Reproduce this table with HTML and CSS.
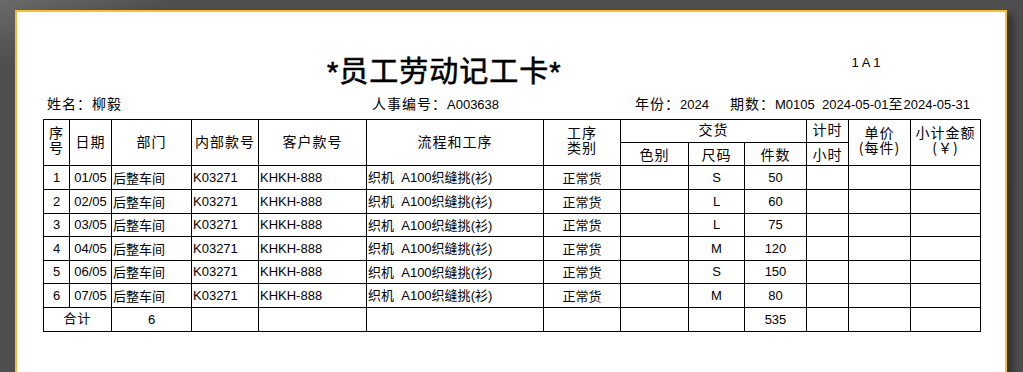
FILE: index.html
```html
<!DOCTYPE html>
<html lang="zh">
<head>
<meta charset="utf-8">
<title>员工劳动记工卡</title>
<link rel="stylesheet" href="styles.css">
</head>
<body>
<div class="page">
  <div class="head">
    <h1 class="title">*员工劳动记工卡*</h1>
    <div class="code">1 A 1</div>
  </div>
  <div class="info">
    <div><span class="cj">姓名：柳毅</span></div>
    <div><span class="cj">人事编号：</span>A003638</div>
    <div><span class="cj">年份：</span>2024</div>
    <div><span class="cj">期数：</span>M0105&nbsp; 2024-05-01<span class="cj">至</span>2024-05-31</div>
  </div>
  <table class="card">
    <colgroup>
      <col class="c1"><col class="c2"><col class="c3"><col class="c4"><col class="c5"><col class="c6"><col class="c7"><col class="c8"><col class="c9"><col class="c10"><col class="c11"><col class="c12"><col class="c13">
    </colgroup>
    <thead>
      <tr class="h1">
        <th rowspan="2" class="stack">序<br>号</th>
        <th rowspan="2">日期</th>
        <th rowspan="2">部门</th>
        <th rowspan="2">内部款号</th>
        <th rowspan="2">客户款号</th>
        <th rowspan="2">流程和工序</th>
        <th rowspan="2" class="stack">工序<br>类别</th>
        <th colspan="3" class="top">交货</th>
        <th class="top">计时</th>
        <th rowspan="2" class="stack">单价<br>(每件)</th>
        <th rowspan="2" class="stack">小计金额<br>(￥)</th>
      </tr>
      <tr class="h2">
        <th>色别</th>
        <th>尺码</th>
        <th>件数</th>
        <th>小时</th>
      </tr>
    </thead>
    <tbody>
      <tr class="r24"><td class="ctr">1</td><td class="ctr">01/05</td><td class="cj">后整车间</td><td>K03271</td><td>KHKH-888</td><td><span class="cj">织机</span>&nbsp; A100<span class="cj">织缝挑</span>(<span class="cj">衫</span>)</td><td class="ctr cj">正常货</td><td></td><td class="ctr">S</td><td class="ctr">50</td><td></td><td></td><td></td></tr>
      <tr class="r24"><td class="ctr">2</td><td class="ctr">02/05</td><td class="cj">后整车间</td><td>K03271</td><td>KHKH-888</td><td><span class="cj">织机</span>&nbsp; A100<span class="cj">织缝挑</span>(<span class="cj">衫</span>)</td><td class="ctr cj">正常货</td><td></td><td class="ctr">L</td><td class="ctr">60</td><td></td><td></td><td></td></tr>
      <tr class="r23"><td class="ctr">3</td><td class="ctr">03/05</td><td class="cj">后整车间</td><td>K03271</td><td>KHKH-888</td><td><span class="cj">织机</span>&nbsp; A100<span class="cj">织缝挑</span>(<span class="cj">衫</span>)</td><td class="ctr cj">正常货</td><td></td><td class="ctr">L</td><td class="ctr">75</td><td></td><td></td><td></td></tr>
      <tr class="r24"><td class="ctr">4</td><td class="ctr">04/05</td><td class="cj">后整车间</td><td>K03271</td><td>KHKH-888</td><td><span class="cj">织机</span>&nbsp; A100<span class="cj">织缝挑</span>(<span class="cj">衫</span>)</td><td class="ctr cj">正常货</td><td></td><td class="ctr">M</td><td class="ctr">120</td><td></td><td></td><td></td></tr>
      <tr class="r23"><td class="ctr">5</td><td class="ctr">06/05</td><td class="cj">后整车间</td><td>K03271</td><td>KHKH-888</td><td><span class="cj">织机</span>&nbsp; A100<span class="cj">织缝挑</span>(<span class="cj">衫</span>)</td><td class="ctr cj">正常货</td><td></td><td class="ctr">S</td><td class="ctr">150</td><td></td><td></td><td></td></tr>
      <tr class="r24"><td class="ctr">6</td><td class="ctr">07/05</td><td class="cj">后整车间</td><td>K03271</td><td>KHKH-888</td><td><span class="cj">织机</span>&nbsp; A100<span class="cj">织缝挑</span>(<span class="cj">衫</span>)</td><td class="ctr cj">正常货</td><td></td><td class="ctr">M</td><td class="ctr">80</td><td></td><td></td><td></td></tr>
      <tr class="r24 total"><td colspan="2" class="ctr cj sum">合计</td><td class="ctr">6</td><td></td><td></td><td></td><td></td><td></td><td></td><td class="ctr">535</td><td></td><td></td><td></td></tr>
    </tbody>
  </table>
</div>
</body>
</html>
```

FILE: styles.css
```css
html, body {
  margin: 0;
  padding: 0;
  height: 100%;
  overflow: hidden;
}
body {
  background: linear-gradient(160deg, #6a6a6a 0px, #4f4f4f 60px, #4d4d4d 100%);
  font-family: "Liberation Sans", "Noto Sans CJK SC", sans-serif;
  color: #000;
}
.page {
  margin: 10px 16px 0 15px;
  border: 2px solid #f7bd38;
  border-bottom: none;
  background: #fff;
  height: 362px;
  box-shadow: 7px 4px 6px rgba(0, 0, 0, 0.3);
  box-sizing: border-box;
}
.head {
  display: flex;
  align-items: flex-start;
  padding: 43px 0 0 310px;
}
.title {
  margin: 0;
  font-family: "Liberation Sans", "Noto Sans CJK SC", sans-serif;
  font-size: 29px;
  line-height: 34px;
  font-weight: normal;
  -webkit-text-stroke: 0.6px #000;
  letter-spacing: 1px;
}
.code {
  margin-left: 290px;
  margin-top: 0;
  font-size: 13px;
  line-height: 16px;
}
.info {
  display: grid;
  grid-template-columns: 325px 263px 95px auto;
  padding-left: 30px;
  margin-top: 5px;
  font-size: 13px;
  line-height: 18px;
}
.cj {
  font-family: "Noto Sans CJK SC", "Liberation Sans", sans-serif;
  font-size: 14px;
  letter-spacing: 1px;
}
.card {
  margin: 5px 0 0 26px;
  border-collapse: collapse;
  table-layout: fixed;
  width: 938px;
  font-size: 13px;
}
.c1 { width: 26px; }
.c2 { width: 42px; }
.c3 { width: 80px; }
.c4 { width: 67px; }
.c5 { width: 108px; }
.c6 { width: 177px; }
.c7 { width: 77px; }
.c8 { width: 68px; }
.c9 { width: 56px; }
.c10 { width: 62px; }
.c11 { width: 42px; }
.c12 { width: 62px; }
.c13 { width: 70px; }
.card th, .card td {
  border: 1px solid #000;
  padding: 0 1px;
  overflow: hidden;
  white-space: nowrap;
}
.card th {
  font-family: "Noto Sans CJK SC", "Liberation Sans", sans-serif;
  font-weight: normal;
  font-size: 14px;
  letter-spacing: 1px;
  line-height: 14px;
  text-align: center;
  vertical-align: middle;
  padding-bottom: 4px;
}
.card th.stack {
  line-height: 15px;
  padding-bottom: 5px;
}
.card th.top {
  vertical-align: top;
  padding-top: 2px;
  padding-bottom: 0;
}
.card .h2 th {
  padding-bottom: 1px;
}
.h1 { height: 23px; }
.h2 { height: 23px; }
.r24 { height: 24px; }
.r23 { height: 23px; }
.card td {
  text-align: left;
  vertical-align: middle;
  line-height: 16px;
}
.card td.ctr {
  text-align: center;
}
.card td.cj {
  font-size: 13px;
  letter-spacing: 0;
}
.card td .cj {
  font-size: 13px;
  letter-spacing: 0;
}
.card td.sum {
  letter-spacing: 1px;
  padding-bottom: 3px;
}
```
